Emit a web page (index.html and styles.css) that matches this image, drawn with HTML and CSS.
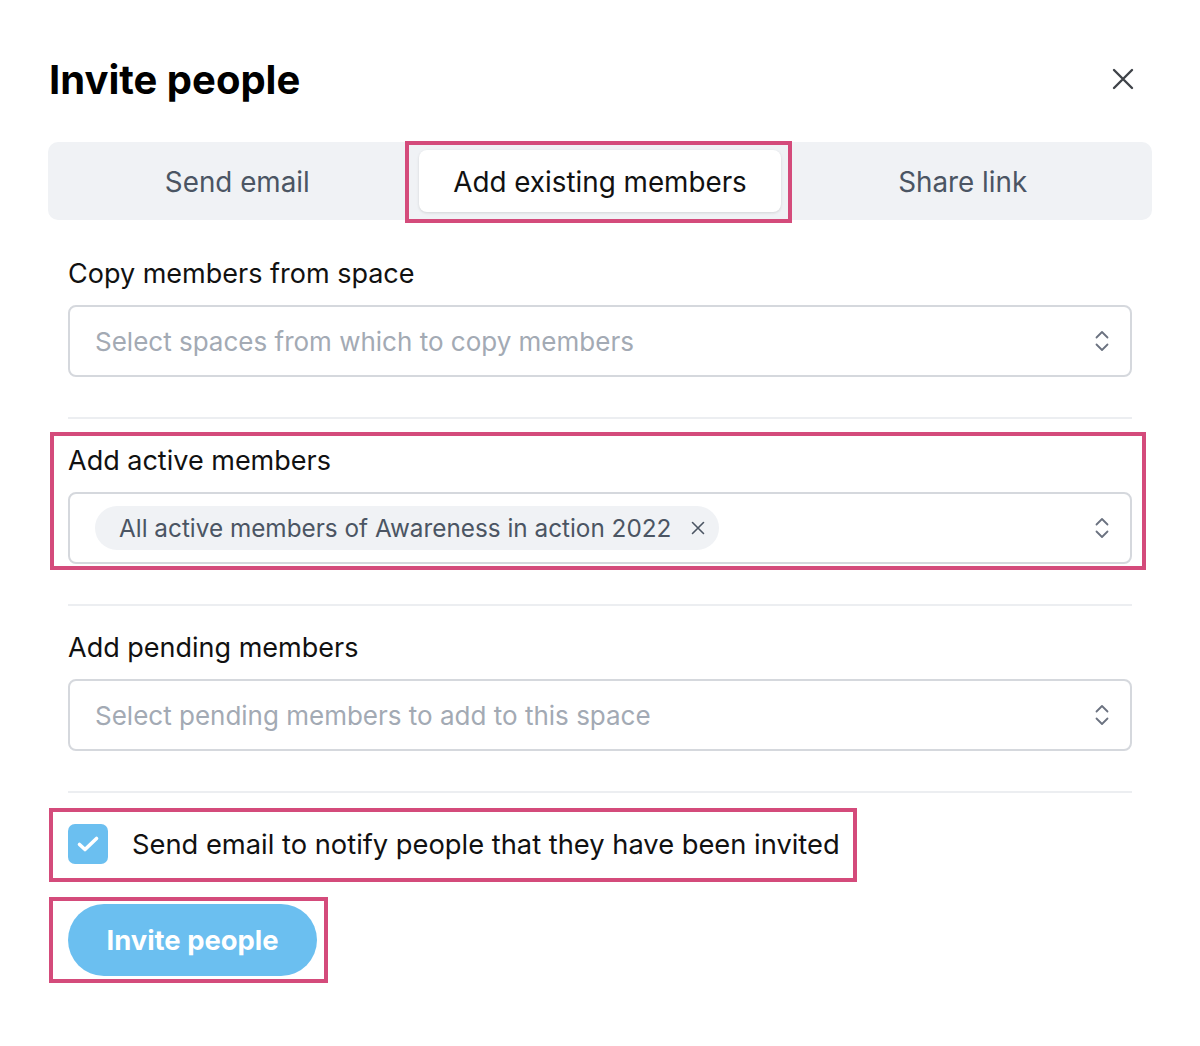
FILE: index.html
```html
<!DOCTYPE html>
<html>
<head>
<meta charset="utf-8">
<link rel="stylesheet" href="styles.css">
</head>
<body>
<div class="dialog">
  <header class="header">
    <h1 class="title">Invite people</h1>
    <button class="close" aria-label="Close">
      <svg width="22" height="22" viewBox="0 0 22 22"><path d="M2 2 L20 20 M20 2 L2 20" stroke="#3f4349" stroke-width="2.4" stroke-linecap="round" fill="none"/></svg>
    </button>
  </header>

  <nav class="tabs">
    <div class="tab">Send email</div>
    <div class="tab active hl-tab">Add existing members</div>
    <div class="tab">Share link</div>
  </nav>

  <div class="form">
    <section class="field first">
      <label class="label">Copy members from space</label>
      <div class="select">
        <span class="placeholder">Select spaces from which to copy members</span>
        <svg class="chev" width="16" height="24" viewBox="0 0 16 24"><path d="M2.5 8.5 L8 3 L13.5 8.5 M2.5 15.5 L8 21 L13.5 15.5" stroke="#6b7280" stroke-width="1.8" fill="none" stroke-linecap="round" stroke-linejoin="round"/></svg>
      </div>
    </section>
    <hr class="divider">
    <section class="field hl-field">
      <label class="label">Add active members</label>
      <div class="select">
        <span class="chip">All active members of Awareness in action 2022
          <svg class="chip-x" width="14" height="14" viewBox="0 0 14 14"><path d="M1.5 1.5 L12.5 12.5 M12.5 1.5 L1.5 12.5" stroke="#4b5563" stroke-width="1.6" stroke-linecap="round"/></svg>
        </span>
        <svg class="chev" width="16" height="24" viewBox="0 0 16 24"><path d="M2.5 8.5 L8 3 L13.5 8.5 M2.5 15.5 L8 21 L13.5 15.5" stroke="#6b7280" stroke-width="1.8" fill="none" stroke-linecap="round" stroke-linejoin="round"/></svg>
      </div>
    </section>
    <hr class="divider">
    <section class="field">
      <label class="label">Add pending members</label>
      <div class="select">
        <span class="placeholder">Select pending members to add to this space</span>
        <svg class="chev" width="16" height="24" viewBox="0 0 16 24"><path d="M2.5 8.5 L8 3 L13.5 8.5 M2.5 15.5 L8 21 L13.5 15.5" stroke="#6b7280" stroke-width="1.8" fill="none" stroke-linecap="round" stroke-linejoin="round"/></svg>
      </div>
    </section>
    <hr class="divider">

    <div class="check-row hl-check">
      <span class="checkbox">
        <svg width="40" height="40" viewBox="0 0 40 40"><path d="M11.5 20.5 L17 25.5 L28.5 14.5" stroke="#fff" stroke-width="3.6" fill="none" stroke-linecap="round" stroke-linejoin="round"/></svg>
      </span>
      <span class="check-text">Send email to notify people that they have been invited</span>
    </div>

    <div class="actions">
      <button class="primary hl-btn">Invite people</button>
    </div>
  </div>
</div>
</body>
</html>
```

FILE: styles.css
```css
* { box-sizing: border-box; }
html, body { margin: 0; padding: 0; background: #fff; }
body {
  font-family: Inter, "Noto Sans", "Liberation Sans", sans-serif;
  color: #111;
  width: 1200px;
  height: 1046px;
}
.dialog {
  padding: 0 48px;
}
.header {
  display: flex;
  align-items: center;
  justify-content: space-between;
  height: 142px;
  padding-top: 16px;
}
.title {
  margin: 0;
  font-size: 40px;
  font-weight: 700;
  letter-spacing: 0;
  color: #000;
  padding-left: 1px;
}
.close {
  border: 0;
  background: none;
  padding: 0;
  margin-right: 18px;
  display: flex;
}
.tabs {
  display: flex;
  background: #f0f2f5;
  border-radius: 10px;
  padding: 8px;
  height: 78px;
}
.tab {
  flex: 1;
  display: flex;
  align-items: center;
  justify-content: center;
  font-size: 27.8px;
  color: #4b5563;
  border-radius: 8px;
  position: relative;
  padding-top: 2px;
}
.tab.active {
  background: #fff;
  color: #111;
  box-shadow: 0 1px 3px rgba(0,0,0,0.12);
}
.hl-tab::after {
  content: "";
  position: absolute;
  left: -14px; right: -11px; top: -9px; bottom: -11px;
  border: 4px solid #d44b7b;
  pointer-events: none;
}
.form {
  padding: 0 20px;
}
.field {
  display: flex;
  flex-direction: column;
  gap: 15px;
  padding: 26px 0 40px;
  position: relative;
}
.field.first { padding-top: 38px; }
.label {
  font-size: 27px;
  line-height: 32px;
  color: #111;
}
.select {
  height: 72px;
  border: 2px solid #d5d8dd;
  border-radius: 8px;
  display: flex;
  align-items: center;
  justify-content: space-between;
  padding: 0 20px 0 25px;
}
.placeholder {
  font-size: 26px;
  color: #a3aab4;
}
.chev { flex: none; }
.chip {
  display: inline-flex;
  align-items: center;
  gap: 20px;
  height: 44px;
  padding: 0 14px 0 24px;
  border-radius: 22px;
  background: #f0f2f5;
  font-size: 24.3px;
  color: #4b5563;
}
.chip-x { flex: none; }
.hl-field::after {
  content: "";
  position: absolute;
  left: -18px; right: -14px; top: 13px; bottom: 34px;
  border: 4px solid #d44b7b;
  pointer-events: none;
}
.divider {
  border: 0;
  height: 2px;
  background: #eceef1;
  margin: 0;
}
.check-row {
  display: inline-flex;
  align-items: center;
  gap: 24px;
  margin-top: 31px;
  position: relative;
}
.checkbox {
  width: 40px;
  height: 40px;
  border-radius: 7px;
  background: #6bbff0;
  display: flex;
  align-items: center;
  justify-content: center;
}
.check-text {
  font-size: 27.3px;
  color: #111;
}
.hl-check::after {
  content: "";
  position: absolute;
  left: -19px; right: -17px; top: -16px; bottom: -18px;
  border: 4px solid #d44b7b;
  pointer-events: none;
}
.actions {
  margin-top: 36px;
  display: flex;
}
.primary {
  position: relative;
  height: 72px;
  width: 249px;
  border: 0;
  border-radius: 36px;
  background: #6bbff0;
  color: #fff;
  font-family: inherit;
  font-size: 27.4px;
  font-weight: 700;
  padding: 0;
}
.hl-btn::after {
  content: "";
  position: absolute;
  left: -19px; right: -11px; top: -7px; bottom: -7px;
  border: 4px solid #d44b7b;
  pointer-events: none;
}
```
